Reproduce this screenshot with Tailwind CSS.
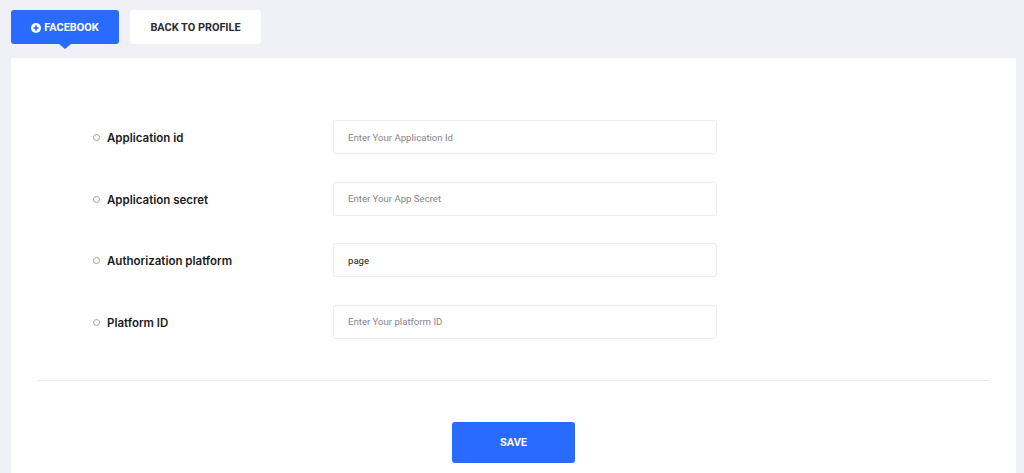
<!DOCTYPE html>
<html lang="en">
<head>
    <meta charset="UTF-8">
    <title>Facebook settings</title>
    <script src="https://cdn.jsdelivr.net/npm/@tailwindcss/browser@4"></script>
</head>
<body class="bg-[#f0f1f7] h-[473px] overflow-hidden font-['Roboto',sans-serif]">
    <!-- Tabs -->
    <div class="flex gap-[11px] pl-[11px] pt-[10px] h-[58px]">
        <button type="button" class="relative flex items-center justify-center gap-[3px] w-[108px] h-[34px] pt-[2px] bg-[#2a6bff] text-white text-[10.9px] font-bold rounded-[3px]">
            <svg class="w-[10px] h-[10px] -mt-[1px]" viewBox="0 0 12 12"><circle cx="6" cy="6" r="6" fill="#fff"/><path d="M6 2.8v6.4M2.8 6h6.4" stroke="#2a6bff" stroke-width="2"/></svg>
            FACEBOOK
            <span class="absolute left-1/2 -translate-x-1/2 top-full w-0 h-0 border-x-[6px] border-x-transparent border-t-[5px] border-t-[#2a6bff]"></span>
        </button>
        <button type="button" class="w-[131px] h-[34px] pt-[2px] bg-white text-[#2b2b33] text-[10.9px] font-bold rounded-[3px]">BACK TO PROFILE</button>
    </div>

    <!-- Panel -->
    <div class="ml-[11px] w-[1005px] h-[415px] bg-white px-[27px] pt-[62px]">
        <form>
            <div class="space-y-[27.67px] pl-[55px]">
                <div class="flex items-center h-[34px]">
                    <span class="w-[7px] h-[7px] rounded-full border border-gray-400 mr-[7px] mt-[1px]"></span>
                    <label class="w-[226px] pt-[3px] text-[11.5px] font-semibold font-['Inter',sans-serif] text-[#1c1c24]">Application id</label>
                    <input type="text" placeholder="Enter Your Application Id" class="w-[384px] h-[34px] border border-[#ebecf0] rounded-[3px] px-[14px] text-[9.6px] text-[#222] placeholder:text-[#85858c]">
                </div>
                <div class="flex items-center h-[34px]">
                    <span class="w-[7px] h-[7px] rounded-full border border-gray-400 mr-[7px] mt-[1px]"></span>
                    <label class="w-[226px] pt-[3px] text-[11.5px] font-semibold font-['Inter',sans-serif] text-[#1c1c24]">Application secret</label>
                    <input type="text" placeholder="Enter Your App Secret" class="w-[384px] h-[34px] border border-[#ebecf0] rounded-[3px] px-[14px] text-[9.6px] text-[#222] placeholder:text-[#85858c]">
                </div>
                <div class="flex items-center h-[34px]">
                    <span class="w-[7px] h-[7px] rounded-full border border-gray-400 mr-[7px] mt-[1px]"></span>
                    <label class="w-[226px] pt-[3px] text-[11.5px] font-semibold font-['Inter',sans-serif] text-[#1c1c24]">Authorization platform</label>
                    <input type="text" value="page" class="w-[384px] h-[34px] border border-[#ebecf0] rounded-[3px] px-[14px] text-[9.6px] text-[#222]">
                </div>
                <div class="flex items-center h-[34px]">
                    <span class="w-[7px] h-[7px] rounded-full border border-gray-400 mr-[7px] mt-[1px]"></span>
                    <label class="w-[226px] pt-[3px] text-[11.5px] font-semibold font-['Inter',sans-serif] text-[#1c1c24]">Platform ID</label>
                    <input type="text" placeholder="Enter Your platform ID" class="w-[384px] h-[34px] border border-[#ebecf0] rounded-[3px] px-[14px] text-[9.6px] text-[#222] placeholder:text-[#85858c]">
                </div>
            </div>
            <div class="border-t border-[#ececee] mt-[41px] w-[951px]"></div>
            <div class="flex justify-center mt-[41px] w-[951px]">
                <button type="submit" class="w-[123px] h-[41px] pt-[2px] bg-[#2a6bff] text-white text-[11px] font-bold rounded-[3px]">SAVE</button>
            </div>
        </form>
    </div>
</body>
</html>
